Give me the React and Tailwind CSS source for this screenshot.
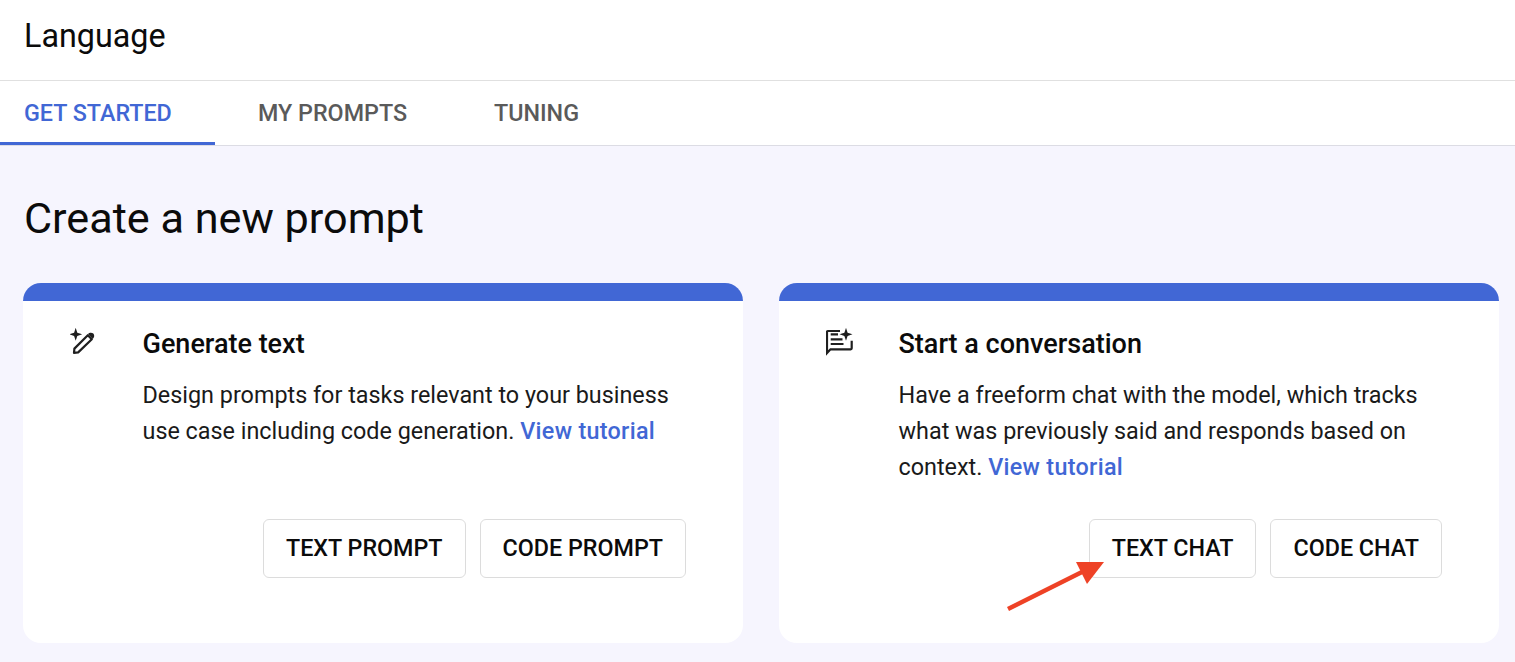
import React from "react";

const PenSparkIcon = () => (
  <svg width="28" height="28" viewBox="0 0 28 28" fill="none">
    <path d="M5.700 -0.200 L7.300 4.700 L12.200 6.300 L7.300 7.900 L5.700 12.800 L4.100 7.900 L-0.800 6.300 L4.100 4.700 Z" fill="#1f1f1f" />
    <path d="M4 24.800 L4.400 20.600 L17.800 7.200 L21.800 11.200 L8.200 24.400 Z" stroke="#1f1f1f" strokeWidth="2.200" strokeLinejoin="round" />
    <path d="M18 6 C19.500 4.200 22 4.300 23.300 5.600 C24.700 7 24.500 9.500 22.800 11 Z" fill="#1f1f1f" />
  </svg>
);

const ChatSparkIcon = () => (
  <svg width="28" height="28" viewBox="0 0 28 28" fill="none">
    <path d="M14 3 H2 A1 1 0 0 0 1 4 V25 L4.500 21.300 H24.700 A1 1 0 0 0 25.700 20.300 V12.700" stroke="#1f1f1f" strokeWidth="2.200" />
    <path d="M4.700 6.300 H12 M4.700 11.300 H16.500 M4.700 16 H17.500" stroke="#1f1f1f" strokeWidth="2.200" />
    <path d="M20 -0.200 L21.600 4.700 L26.500 6.300 L21.600 7.900 L20 12.800 L18.400 7.900 L13.500 6.300 L18.400 4.700 Z" fill="#1f1f1f" />
  </svg>
);

const Card = ({ icon, title, children, buttons }) => (
  <div className="flex-1 h-[360px] bg-white rounded-[18px] overflow-hidden border-t-[18px] border-[#4167d5]">
    <div className="flex pl-[47px] pr-[57px]">
      <div className="w-[72.500px] pt-[27px] shrink-0">{icon}</div>
      <div className="flex-1">
        <h2 className="text-[27px] leading-[32px] font-medium text-[#0b0b0b] mt-[27px]">{title}</h2>
        <p className="text-[23.370px] leading-[36px] text-[#1a1a1a] mt-[17px] h-[108px] whitespace-nowrap">{children}</p>
      </div>
    </div>
    <div className="flex justify-end gap-[14px] pr-[57px] mt-[34px]">
      {buttons.map((label) => (
        <button
          key={label}
          type="button"
          className="h-[59px] px-[22px] bg-white border border-[#dcdcdc] rounded-[6px] text-[23.300px] font-medium text-[#0b0b0b]"
        >
          {label}
        </button>
      ))}
    </div>
  </div>
);

const App = () => {
  return (
    <div className="relative h-[662px] overflow-hidden bg-[#f6f5fe] font-['Roboto',sans-serif]">
      <div className="h-[81px] bg-white border-b border-[#e0e0e0] pl-[24px] pt-[16px]">
        <h1 className="text-[32.300px] leading-[40px] text-[#0b0b0b]">Language</h1>
      </div>
      <div className="flex h-[65px] bg-white border-b border-[#dcdce4]">
        <div className="w-[215px] flex items-center pl-[24px] border-b-[3px] border-[#4167d5] h-[64px] pt-[3px] text-[23.300px] font-medium text-[#4167d5]">
          GET STARTED
        </div>
        <div className="flex items-center ml-[43px] pt-[1px] text-[23.300px] font-medium text-[#5a5a5a]">MY PROMPTS</div>
        <div className="flex items-center ml-[87px] pt-[1px] text-[23.300px] font-medium text-[#5a5a5a]">TUNING</div>
      </div>
      <div className="px-[24px] pt-[45px] pr-[16px]">
        <h2 className="text-[43.200px] leading-[56px] text-[#0b0b0b]">Create a new prompt</h2>
        <div className="flex gap-[36px] mt-[36px] -ml-px">
          <Card
            icon={<PenSparkIcon />}
            title="Generate text"
            buttons={["TEXT PROMPT", "CODE PROMPT"]}
          >
            Design prompts for tasks relevant to your business
            <br />
            use case including code generation.{" "}
            <span className="font-medium tracking-[0.3px] text-[#4167d5]">View tutorial</span>
          </Card>
          <Card
            icon={<ChatSparkIcon />}
            title="Start a conversation"
            buttons={["TEXT CHAT", "CODE CHAT"]}
          >
            Have a freeform chat with the model, which tracks
            <br />
            what was previously said and responds based on
            <br />
            context. <span className="font-medium tracking-[0.3px] text-[#4167d5]">View tutorial</span>
          </Card>
        </div>
      </div>
      {/* annotation arrow */}
      <svg className="absolute left-[1000px] top-[555px]" width="110" height="60" viewBox="0 0 110 60" fill="none">
        <path d="M8 54 L82 17" stroke="#ee4226" strokeWidth="4.500" />
        <path d="M76 7 L104 7 L87 29 Z" fill="#ee4226" />
      </svg>
    </div>
  );
};

export default App;
